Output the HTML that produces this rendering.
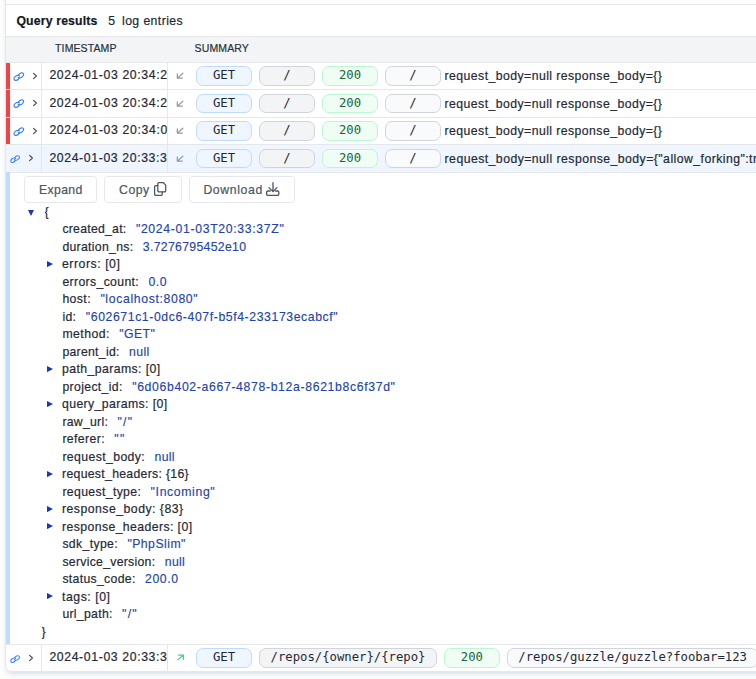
<!DOCTYPE html>
<html lang="en"><head><meta charset="utf-8"><title>Query results</title>
<style>
html,body{margin:0;padding:0;background:#fff}
html{overflow:hidden}
body{width:756px;height:679px;overflow:hidden}
#root{width:756px;height:679px;overflow:hidden;position:relative;background:#fff;font-family:"Liberation Sans",sans-serif;font-size:12.25px;line-height:17.5px;color:#1f2937}
.a{position:absolute}
span{white-space:pre}
.t span{-webkit-text-stroke:.2px}
.card{left:5px;top:-30px;width:900px;height:702px;box-sizing:border-box;border:1px solid #e5e7eb;border-radius:7px;background:#fff;box-shadow:0 4px 6px -1px rgba(20,40,90,.1),0 2px 4px -2px rgba(20,40,90,.1)}
.hl{left:6px;width:750px;height:1px;background:#e5e7eb}
.vl{width:1px;background:#e5e7eb}
.th{left:6px;top:36px;width:750px;height:27px;box-sizing:border-box;background:#f3f4f6;border-top:1px solid #e5e7eb;border-bottom:1px solid #e5e7eb}
.tht{font-size:10.5px;color:#283240;top:40px}
.t{height:17.5px;line-height:17.5px;overflow:hidden}
.red{left:6px;width:4px;background:#ef4444}
.bar{left:6px;top:172px;width:4px;height:472px;background:#bfdbfe}
.bd{box-sizing:border-box;height:19.5px;min-width:56px;padding:0 10.5px;border:1px solid;border-radius:7px;font-family:"DejaVu Sans Mono",monospace;font-size:12.25px;line-height:17.5px;text-align:center;color:#1f2937}
.bd.b{background:#eff6ff;border-color:#bfdbfe}
.bd.g{background:#f3f4f6;border-color:#d1d5db}
.bd.s{background:#f0fdf4;border-color:#bbf7d0;color:#166534}
.bd.l{background:#f9fafb;border-color:#d1d5db}
.btn{top:176px;height:27px;box-sizing:border-box;border:1px solid #e5e7eb;border-radius:3.5px;background:#fff;color:#4b5563}
.k{color:#1f2937}.v{color:#2143b2}
.v span{-webkit-text-stroke:.14px}
svg{display:block}
</style></head><body><div id="root">
<div class="a card"></div>
<div class="a hl" style="top:4px"></div>

<div class="a t" style="left:16.4px;top:13px;font-weight:bold;color:#111827"><span style="letter-spacing:0.166px;">Query results</span></div>
<div class="a t" style="left:108.3px;top:13px"><span style="letter-spacing:0.625px;">5</span></div>
<div class="a t" style="left:122px;top:13px"><span style="letter-spacing:0.411px;">log entries</span></div>
<div class="a th"></div>
<div class="a t tht" style="left:55.1px"><span style="letter-spacing:0.108px;">TIMESTAMP</span></div>
<div class="a t tht" style="left:194.6px"><span style="letter-spacing:0.132px;">SUMMARY</span></div>
<div class="a red" style="top:63px;height:26px"></div>
<div class="a" style="left:11.5px;top:70.65px"><svg viewBox="0 0 14 11" width="14.00" height="11.00" fill="none" stroke="#3b7cf4" stroke-width="1.15" stroke-linecap="round"><path d="M7.24 7.09A3.2 2.0 -35 1 1 7.42 4.96"/><path d="M6.36 4.11A3.2 2.0 -35 1 1 6.18 6.24"/></svg></div>
<div class="a" style="left:32px;top:71.60px"><svg viewBox="0 0 6 8" width="6" height="8" fill="none" stroke="#3f4957" stroke-width="1.15" stroke-linecap="round" stroke-linejoin="round"><path d="M1.6 1.3l2.8 2.7L1.6 6.7"/></svg></div>
<div class="a vl" style="left:41px;top:63px;height:26px"></div>
<div class="a vl" style="left:167px;top:63px;height:26px"></div>
<div class="a t" style="left:49.4px;top:66.90px;width:117.6px"><span style="letter-spacing:0.633px;">2024-01-03 20:34:2</span></div>
<div class="a" style="left:176.3px;top:72.30px"><svg viewBox="0 0 8 7" width="8" height="7" fill="none" stroke="#9097a6" stroke-width="1.2" stroke-linecap="round" stroke-linejoin="round"><path d="M6.9 1.2L1.3 6.1M1.3 1.9V6.1H6.3"/></svg></div>
<div class="a bd b" style="left:196px;top:66.25px;width:56.0px"><span>GET</span></div>
<div class="a bd g" style="left:259px;top:66.25px;width:56.0px"><span>/</span></div>
<div class="a bd s" style="left:322px;top:66.25px;width:56.0px"><span>200</span></div>
<div class="a bd l" style="left:385px;top:66.25px;width:56.0px"><span>/</span></div>
<div class="a t" style="left:444.6px;top:67.90px;width:400px"><span style="letter-spacing:0.435px;">request_body=null response_body={}</span></div>
<div class="a red" style="top:90px;height:27px"></div>
<div class="a" style="left:11.5px;top:98.15px"><svg viewBox="0 0 14 11" width="14.00" height="11.00" fill="none" stroke="#3b7cf4" stroke-width="1.15" stroke-linecap="round"><path d="M7.24 7.09A3.2 2.0 -35 1 1 7.42 4.96"/><path d="M6.36 4.11A3.2 2.0 -35 1 1 6.18 6.24"/></svg></div>
<div class="a" style="left:32px;top:99.10px"><svg viewBox="0 0 6 8" width="6" height="8" fill="none" stroke="#3f4957" stroke-width="1.15" stroke-linecap="round" stroke-linejoin="round"><path d="M1.6 1.3l2.8 2.7L1.6 6.7"/></svg></div>
<div class="a vl" style="left:41px;top:90px;height:27px"></div>
<div class="a vl" style="left:167px;top:90px;height:27px"></div>
<div class="a t" style="left:49.4px;top:95.00px;width:117.6px"><span style="letter-spacing:0.633px;">2024-01-03 20:34:2</span></div>
<div class="a" style="left:176.3px;top:99.80px"><svg viewBox="0 0 8 7" width="8" height="7" fill="none" stroke="#9097a6" stroke-width="1.2" stroke-linecap="round" stroke-linejoin="round"><path d="M6.9 1.2L1.3 6.1M1.3 1.9V6.1H6.3"/></svg></div>
<div class="a bd b" style="left:196px;top:93.75px;width:56.0px"><span>GET</span></div>
<div class="a bd g" style="left:259px;top:93.75px;width:56.0px"><span>/</span></div>
<div class="a bd s" style="left:322px;top:93.75px;width:56.0px"><span>200</span></div>
<div class="a bd l" style="left:385px;top:93.75px;width:56.0px"><span>/</span></div>
<div class="a t" style="left:444.6px;top:96.00px;width:400px"><span style="letter-spacing:0.435px;">request_body=null response_body={}</span></div>
<div class="a red" style="top:118px;height:26px"></div>
<div class="a" style="left:11.5px;top:125.65px"><svg viewBox="0 0 14 11" width="14.00" height="11.00" fill="none" stroke="#3b7cf4" stroke-width="1.15" stroke-linecap="round"><path d="M7.24 7.09A3.2 2.0 -35 1 1 7.42 4.96"/><path d="M6.36 4.11A3.2 2.0 -35 1 1 6.18 6.24"/></svg></div>
<div class="a" style="left:32px;top:126.60px"><svg viewBox="0 0 6 8" width="6" height="8" fill="none" stroke="#3f4957" stroke-width="1.15" stroke-linecap="round" stroke-linejoin="round"><path d="M1.6 1.3l2.8 2.7L1.6 6.7"/></svg></div>
<div class="a vl" style="left:41px;top:118px;height:26px"></div>
<div class="a vl" style="left:167px;top:118px;height:26px"></div>
<div class="a t" style="left:49.4px;top:121.90px;width:117.6px"><span style="letter-spacing:0.647px;">2024-01-03 20:34:0</span></div>
<div class="a" style="left:176.3px;top:127.30px"><svg viewBox="0 0 8 7" width="8" height="7" fill="none" stroke="#9097a6" stroke-width="1.2" stroke-linecap="round" stroke-linejoin="round"><path d="M6.9 1.2L1.3 6.1M1.3 1.9V6.1H6.3"/></svg></div>
<div class="a bd b" style="left:196px;top:121.25px;width:56.0px"><span>GET</span></div>
<div class="a bd g" style="left:259px;top:121.25px;width:56.0px"><span>/</span></div>
<div class="a bd s" style="left:322px;top:121.25px;width:56.0px"><span>200</span></div>
<div class="a bd l" style="left:385px;top:121.25px;width:56.0px"><span>/</span></div>
<div class="a t" style="left:444.6px;top:122.90px;width:400px"><span style="letter-spacing:0.435px;">request_body=null response_body={}</span></div>
<div class="a" style="left:6px;top:145px;width:750px;height:27px;background:#eff6ff"></div>
<div class="a" style="left:8.7px;top:154.05px"><svg viewBox="0 0 14 11" width="12.60" height="9.90" fill="none" stroke="#3b7cf4" stroke-width="1.15" stroke-linecap="round"><path d="M7.24 7.09A3.2 2.0 -35 1 1 7.42 4.96"/><path d="M6.36 4.11A3.2 2.0 -35 1 1 6.18 6.24"/></svg></div>
<div class="a" style="left:28px;top:154.20px"><svg viewBox="0 0 6 8" width="6" height="8" fill="none" stroke="#3f4957" stroke-width="1.15" stroke-linecap="round" stroke-linejoin="round"><path d="M1.6 1.3l2.8 2.7L1.6 6.7"/></svg></div>
<div class="a vl" style="left:41px;top:145px;height:27px"></div>
<div class="a vl" style="left:167px;top:145px;height:27px"></div>
<div class="a t" style="left:49.4px;top:150.00px;width:117.6px"><span style="letter-spacing:0.619px;">2024-01-03 20:33:3</span></div>
<div class="a" style="left:176.3px;top:154.80px"><svg viewBox="0 0 8 7" width="8" height="7" fill="none" stroke="#9097a6" stroke-width="1.2" stroke-linecap="round" stroke-linejoin="round"><path d="M6.9 1.2L1.3 6.1M1.3 1.9V6.1H6.3"/></svg></div>
<div class="a bd b" style="left:196px;top:148.75px;width:56.0px"><span>GET</span></div>
<div class="a bd g" style="left:259px;top:148.75px;width:56.0px"><span>/</span></div>
<div class="a bd s" style="left:322px;top:148.75px;width:56.0px"><span>200</span></div>
<div class="a bd l" style="left:385px;top:148.75px;width:56.0px"><span>/</span></div>
<div class="a t" style="left:444.6px;top:151.00px;width:400px"><span style="letter-spacing:0.450px;">request_body=null response_body={&quot;allow_forking&quot;:true,&quot;archive_url&quot;:&quot;&quot;}</span></div>
<div class="a" style="left:8.7px;top:654.05px"><svg viewBox="0 0 14 11" width="12.60" height="9.90" fill="none" stroke="#3b7cf4" stroke-width="1.15" stroke-linecap="round"><path d="M7.24 7.09A3.2 2.0 -35 1 1 7.42 4.96"/><path d="M6.36 4.11A3.2 2.0 -35 1 1 6.18 6.24"/></svg></div>
<div class="a" style="left:28px;top:653.70px"><svg viewBox="0 0 6 8" width="6" height="8" fill="none" stroke="#3f4957" stroke-width="1.15" stroke-linecap="round" stroke-linejoin="round"><path d="M1.6 1.3l2.8 2.7L1.6 6.7"/></svg></div>
<div class="a vl" style="left:41px;top:645px;height:26px"></div>
<div class="a vl" style="left:167px;top:645px;height:26px"></div>
<div class="a t" style="left:49.4px;top:648.90px;width:117.6px"><span style="letter-spacing:0.619px;">2024-01-03 20:33:3</span></div>
<div class="a" style="left:176.9px;top:654.40px"><svg viewBox="0 0 8 7" width="8" height="7" fill="none" stroke="#41d67c" stroke-width="1.2" stroke-linecap="round" stroke-linejoin="round"><path d="M0.9 5.7L6.4 1.1M1.5 1.1H6.4V5.4"/></svg></div>
<div class="a bd b" style="left:196px;top:648.25px;width:56.0px"><span>GET</span></div>
<div class="a bd g" style="left:259px;top:648.25px;width:177.9px"><span>/repos/{owner}/{repo}</span></div>
<div class="a bd s" style="left:443.8645px;top:648.25px;width:56.0px"><span>200</span></div>
<div class="a bd l" style="left:506.8645px;top:648.25px;width:251.6px"><span>/repos/guzzle/guzzle?foobar=123</span></div>
<div class="a hl" style="top:89px"></div>
<div class="a hl" style="top:117px"></div>
<div class="a hl" style="top:144px"></div>
<div class="a hl" style="top:172px"></div>
<div class="a hl" style="top:644px"></div>
<div class="a bar"></div>
<div class="a btn" style="left:24px;width:73px"><div class="a t" style="left:13.9px;top:5px"><span style="letter-spacing:0.389px;">Expand</span></div></div>
<div class="a btn" style="left:104px;width:78px"><div class="a t" style="left:14.1px;top:5px"><span style="letter-spacing:0.461px;">Copy</span></div><div class="a" style="left:48px;top:4px"><svg viewBox="0 0 15 16" width="15" height="16" fill="none" stroke="#4b5563" stroke-width="1.25" stroke-linejoin="round" stroke-linecap="round"><path d="M5.9 1.5h4.2l2.6 2.6v5.6a1.1 1.1 0 0 1-1.1 1.1H5.9a1.1 1.1 0 0 1-1.1-1.1V2.6a1.1 1.1 0 0 1 1.1-1.1z"/><path d="M4.8 4.7H2.7a1.1 1.1 0 0 0-1.1 1.1v7.4a1.1 1.1 0 0 0 1.1 1.1h5.4a1.1 1.1 0 0 0 1.1-1.1v-2.4"/></svg></div></div>
<div class="a btn" style="left:189px;width:106px"><div class="a t" style="left:13.4px;top:5px"><span style="letter-spacing:0.620px;">Download</span></div><div class="a" style="left:75px;top:4px"><svg viewBox="0 0 16 16" width="16" height="16" fill="none" stroke="#4b5563" stroke-width="1.3" stroke-linejoin="round" stroke-linecap="round"><path d="M8 1.6v9M4 6.6l4 4 4-4"/><path d="M5.2 10H2.8a1.2 1.2 0 0 0-1.2 1.2v1.9a1.2 1.2 0 0 0 1.2 1.2h9.8a1.2 1.2 0 0 0 1.2-1.2v-1.9a1.2 1.2 0 0 0-1.2-1.2h-2.1"/></svg></div></div>
<svg class="a" style="left:27.8px;top:209.70px" width="6" height="6" viewBox="0 0 6 6"><path d="M0 0h6L3 6z" fill="#1a38b0"/></svg>
<div class="a t k" style="left:44.5px;top:203.5px"><span style="letter-spacing:1.141px;">{</span></div>
<div class="a t k" style="left:62.4px;top:221.0px"><span style="letter-spacing:0.254px;">created_at:</span></div>
<div class="a t v" style="left:135.89px;top:221.0px"><span style="letter-spacing:0.663px;">&quot;2024-01-03T20:33:37Z&quot;</span></div>
<div class="a t k" style="left:62.4px;top:238.5px"><span style="letter-spacing:0.299px;">duration_ns:</span></div>
<div class="a t v" style="left:142.83px;top:238.5px"><span style="letter-spacing:0.315px;">3.7276795452e10</span></div>
<svg class="a" style="left:46.9px;top:260.70px" width="6" height="6.2" viewBox="0 0 6 6.2"><path d="M0 0v6.2L6 3.1z" fill="#1a38b0"/></svg>
<div class="a t k" style="left:62px;top:256.0px"><span style="letter-spacing:0.545px;">errors: [0]</span></div>
<div class="a t k" style="left:62.4px;top:273.5px"><span style="letter-spacing:0.350px;">errors_count:</span></div>
<div class="a t v" style="left:148.53px;top:273.5px"><span style="letter-spacing:0.448px;">0.0</span></div>
<div class="a t k" style="left:62.4px;top:291.0px"><span style="letter-spacing:0.406px;">host:</span></div>
<div class="a t v" style="left:100.39px;top:291.0px"><span style="letter-spacing:0.638px;">&quot;localhost:8080&quot;</span></div>
<div class="a t k" style="left:62.4px;top:308.5px"><span style="letter-spacing:0.349px;">id:</span></div>
<div class="a t v" style="left:85.80px;top:308.5px"><span style="letter-spacing:0.590px;">&quot;602671c1-0dc6-407f-b5f4-233173ecabcf&quot;</span></div>
<div class="a t k" style="left:62.4px;top:326.0px"><span style="letter-spacing:0.462px;">method:</span></div>
<div class="a t v" style="left:119.30px;top:326.0px"><span style="letter-spacing:0.388px;">&quot;GET&quot;</span></div>
<div class="a t k" style="left:62.4px;top:343.5px"><span style="letter-spacing:0.280px;">parent_id:</span></div>
<div class="a t v" style="left:129.10px;top:343.5px"><span style="letter-spacing:0.336px;">null</span></div>
<svg class="a" style="left:46.9px;top:365.70px" width="6" height="6.2" viewBox="0 0 6 6.2"><path d="M0 0v6.2L6 3.1z" fill="#1a38b0"/></svg>
<div class="a t k" style="left:62px;top:361.0px"><span style="letter-spacing:0.415px;">path_params: [0]</span></div>
<div class="a t k" style="left:62.4px;top:378.5px"><span style="letter-spacing:0.349px;">project_id:</span></div>
<div class="a t v" style="left:132.18px;top:378.5px"><span style="letter-spacing:0.645px;">&quot;6d06b402-a667-4878-b12a-8621b8c6f37d&quot;</span></div>
<svg class="a" style="left:46.9px;top:400.70px" width="6" height="6.2" viewBox="0 0 6 6.2"><path d="M0 0v6.2L6 3.1z" fill="#1a38b0"/></svg>
<div class="a t k" style="left:62px;top:396.0px"><span style="letter-spacing:0.394px;">query_params: [0]</span></div>
<div class="a t k" style="left:62.4px;top:413.5px"><span style="letter-spacing:0.260px;">raw_url:</span></div>
<div class="a t v" style="left:117.46px;top:413.5px"><span style="letter-spacing:1.240px;">&quot;/&quot;</span></div>
<div class="a t k" style="left:62.4px;top:431.0px"><span style="letter-spacing:0.385px;">referer:</span></div>
<div class="a t v" style="left:114.36px;top:431.0px"><span style="letter-spacing:1.359px;">&quot;&quot;</span></div>
<div class="a t k" style="left:62.4px;top:448.5px"><span style="letter-spacing:0.392px;">request_body:</span></div>
<div class="a t v" style="left:154.53px;top:448.5px"><span style="letter-spacing:0.336px;">null</span></div>
<svg class="a" style="left:46.9px;top:470.70px" width="6" height="6.2" viewBox="0 0 6 6.2"><path d="M0 0v6.2L6 3.1z" fill="#1a38b0"/></svg>
<div class="a t k" style="left:62px;top:466.0px"><span style="letter-spacing:0.307px;">request_headers: {16}</span></div>
<div class="a t k" style="left:62.4px;top:483.5px"><span style="letter-spacing:0.352px;">request_type:</span></div>
<div class="a t v" style="left:150.61px;top:483.5px"><span style="letter-spacing:0.633px;">&quot;Incoming&quot;</span></div>
<svg class="a" style="left:46.9px;top:505.70px" width="6" height="6.2" viewBox="0 0 6 6.2"><path d="M0 0v6.2L6 3.1z" fill="#1a38b0"/></svg>
<div class="a t k" style="left:62px;top:501.0px"><span style="letter-spacing:0.483px;">response_body: {83}</span></div>
<svg class="a" style="left:46.9px;top:523.20px" width="6" height="6.2" viewBox="0 0 6 6.2"><path d="M0 0v6.2L6 3.1z" fill="#1a38b0"/></svg>
<div class="a t k" style="left:62px;top:518.5px"><span style="letter-spacing:0.407px;">response_headers: [0]</span></div>
<div class="a t k" style="left:62.4px;top:536.0px"><span style="letter-spacing:0.351px;">sdk_type:</span></div>
<div class="a t v" style="left:127.39px;top:536.0px"><span style="letter-spacing:0.467px;">&quot;PhpSlim&quot;</span></div>
<div class="a t k" style="left:62.4px;top:553.5px"><span style="letter-spacing:0.278px;">service_version:</span></div>
<div class="a t v" style="left:164.77px;top:553.5px"><span style="letter-spacing:0.336px;">null</span></div>
<div class="a t k" style="left:62.4px;top:571.0px"><span style="letter-spacing:0.314px;">status_code:</span></div>
<div class="a t v" style="left:145.03px;top:571.0px"><span style="letter-spacing:0.581px;">200.0</span></div>
<svg class="a" style="left:46.9px;top:593.20px" width="6" height="6.2" viewBox="0 0 6 6.2"><path d="M0 0v6.2L6 3.1z" fill="#1a38b0"/></svg>
<div class="a t k" style="left:62px;top:588.5px"><span style="letter-spacing:0.554px;">tags: [0]</span></div>
<div class="a t k" style="left:62.4px;top:606.0px"><span style="letter-spacing:0.290px;">url_path:</span></div>
<div class="a t v" style="left:122.10px;top:606.0px"><span style="letter-spacing:1.240px;">&quot;/&quot;</span></div>
<div class="a t k" style="left:41.6px;top:623.5px"><span style="letter-spacing:1.141px;">}</span></div>
</div></body></html>
